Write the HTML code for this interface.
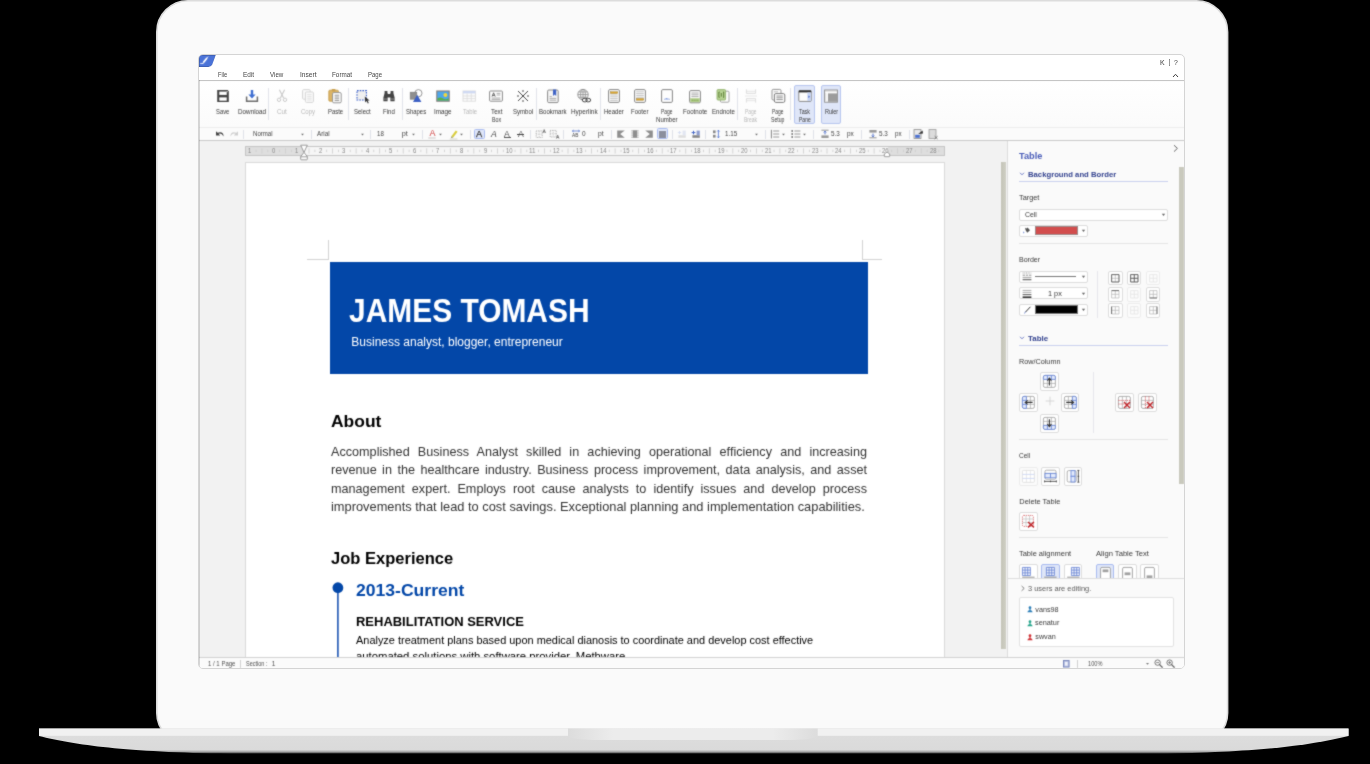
<!DOCTYPE html>
<html><head><meta charset="utf-8"><title>Document Editor</title>
<style>
html,body{margin:0;padding:0;background:#000;}
body{width:1370px;height:764px;overflow:hidden;position:relative;font-family:"Liberation Sans",sans-serif;}
#root{position:absolute;left:0;top:0;width:1370px;height:764px;overflow:hidden;background:#000;}
#root div,#root span.t,#root svg{position:absolute;box-sizing:border-box;}
span.t{white-space:nowrap;line-height:1;transform-origin:0 50%;display:block;}
.clip{overflow:hidden;}
</style></head><body><div id="root">
<svg style="left:0;top:0" width="1370" height="746" viewBox="0 0 1370 746"><path d="M188.0 0.8 H1196.3999999999999 A31.2 31.2 0 0 1 1227.6 32.0 V713 A30 30 0 0 1 1197.6 743 H186.8 A30 30 0 0 1 156.8 713 V32.0 A31.2 31.2 0 0 1 188.0 0.8 Z" fill="#fafafa" stroke="#dcdcdc" stroke-width="1.6"/></svg>
<svg style="left:0;top:720px" width="1370" height="44" viewBox="0 720 1370 44"><defs><linearGradient id="bg1" x1="0" y1="0" x2="0" y2="1"><stop offset="0" stop-color="#dedede"/><stop offset="0.84" stop-color="#dadada"/><stop offset="0.93" stop-color="#a0a0a0"/><stop offset="1" stop-color="#101010"/></linearGradient><linearGradient id="bg2" x1="0" y1="0" x2="1" y2="0"><stop offset="0" stop-color="#dcdcdc"/><stop offset="0.18" stop-color="#ececec"/><stop offset="0.82" stop-color="#ececec"/><stop offset="1" stop-color="#dcdcdc"/></linearGradient></defs><path d="M39 728.6 H1348.5 V736 C1312 745 1262 752 1157 753.8 H230 C125 752 75 745 39 736 Z" fill="url(#bg1)"/><rect x="39" y="728.6" width="1309.5" height="7.2" fill="#f1f1f1"/><path d="M568 728.6 H817.7 V736 C817.7 738.5 800 740 790 740 H596 C586 740 568 738.5 568 736 Z" fill="url(#bg2)"/></svg>
<svg width="0" height="0" style="left:0;top:0"><defs><filter id="soft" x="0" y="0" width="100%" height="100%" color-interpolation-filters="sRGB"><feConvolveMatrix order="3" kernelMatrix="0.03 0.09 0.03 0.09 0.52 0.09 0.03 0.09 0.03" edgeMode="duplicate" preserveAlpha="true"/></filter></defs></svg>
<div style="left:198.4px;top:54px;width:986.4px;height:614.6px;background:#fff;border:1px solid #d4d4d4;border-radius:5px;overflow:hidden;"><div style="left:-199.4px;top:-55px;width:1370px;height:764px;filter:url(#soft);">
<div style="left:199.00px;top:80.00px;width:986.00px;height:1.00px;background:#e3e3e3;"></div>
<div style="left:199.00px;top:81.00px;width:986.00px;height:46.00px;background:linear-gradient(#ffffff,#fbfbfb);"></div>
<div style="left:199.00px;top:127.00px;width:986.00px;height:1.00px;background:#ececec;"></div>
<div style="left:199.00px;top:128.00px;width:986.00px;height:12.00px;background:#fbfbfb;"></div>
<div style="left:199.00px;top:140.00px;width:986.00px;height:1.00px;background:#c9c9c9;"></div>
<div style="left:199.00px;top:141.00px;width:808.50px;height:516.00px;background:#f2f2f2;"></div>
<div style="left:199.00px;top:657.00px;width:986.00px;height:1.00px;background:#d2d2d2;"></div>
<div style="left:199.00px;top:658.00px;width:986.00px;height:11.00px;background:#fbfbfb;"></div>
<div style="left:1001.20px;top:162.40px;width:5.00px;height:486.30px;background:linear-gradient(90deg,#c4c4b8,#cfcfc4);"></div>
<div style="left:1007.00px;top:141.00px;width:178.40px;height:516.00px;background:#fafafa;border-left:1px solid #dcdcdc;"></div>
<div style="left:244.70px;top:146.20px;width:700.00px;height:9.60px;background:#f6f6f6;border:1px solid #c6c6c6;"></div>
<div style="left:245.60px;top:147.10px;width:57.90px;height:7.80px;background:#dedede;"></div>
<div style="left:888.10px;top:147.10px;width:55.70px;height:7.80px;background:#dedede;"></div>
<span class="t" style="left:247.99px;top:147.98px;font-size:6.4px;color:#888;transform:scaleX(0.9273);">1</span>
<span class="t" style="left:271.55px;top:147.98px;font-size:6.4px;color:#888;transform:scaleX(0.9273);">0</span>
<span class="t" style="left:295.11px;top:147.98px;font-size:6.4px;color:#888;transform:scaleX(0.9273);">1</span>
<span class="t" style="left:318.67px;top:147.98px;font-size:6.4px;color:#888;transform:scaleX(0.9273);">2</span>
<span class="t" style="left:342.23px;top:147.98px;font-size:6.4px;color:#888;transform:scaleX(0.9273);">3</span>
<span class="t" style="left:365.79px;top:147.98px;font-size:6.4px;color:#888;transform:scaleX(0.9273);">4</span>
<span class="t" style="left:389.35px;top:147.98px;font-size:6.4px;color:#888;transform:scaleX(0.9273);">5</span>
<span class="t" style="left:412.91px;top:147.98px;font-size:6.4px;color:#888;transform:scaleX(0.9273);">6</span>
<span class="t" style="left:436.47px;top:147.98px;font-size:6.4px;color:#888;transform:scaleX(0.9273);">7</span>
<span class="t" style="left:460.03px;top:147.98px;font-size:6.4px;color:#888;transform:scaleX(0.9273);">8</span>
<span class="t" style="left:483.59px;top:147.98px;font-size:6.4px;color:#888;transform:scaleX(0.9273);">9</span>
<span class="t" style="left:505.50px;top:147.98px;font-size:6.4px;color:#888;transform:scaleX(0.9273);">10</span>
<span class="t" style="left:529.06px;top:147.98px;font-size:6.4px;color:#888;transform:scaleX(0.9936);">11</span>
<span class="t" style="left:552.62px;top:147.98px;font-size:6.4px;color:#888;transform:scaleX(0.9273);">12</span>
<span class="t" style="left:576.18px;top:147.98px;font-size:6.4px;color:#888;transform:scaleX(0.9273);">13</span>
<span class="t" style="left:599.74px;top:147.98px;font-size:6.4px;color:#888;transform:scaleX(0.9273);">14</span>
<span class="t" style="left:623.30px;top:147.98px;font-size:6.4px;color:#888;transform:scaleX(0.9273);">15</span>
<span class="t" style="left:646.86px;top:147.98px;font-size:6.4px;color:#888;transform:scaleX(0.9273);">16</span>
<span class="t" style="left:670.42px;top:147.98px;font-size:6.4px;color:#888;transform:scaleX(0.9273);">17</span>
<span class="t" style="left:693.98px;top:147.98px;font-size:6.4px;color:#888;transform:scaleX(0.9273);">18</span>
<span class="t" style="left:717.54px;top:147.98px;font-size:6.4px;color:#888;transform:scaleX(0.9273);">19</span>
<span class="t" style="left:741.10px;top:147.98px;font-size:6.4px;color:#888;transform:scaleX(0.9273);">20</span>
<span class="t" style="left:764.66px;top:147.98px;font-size:6.4px;color:#888;transform:scaleX(0.9273);">21</span>
<span class="t" style="left:788.22px;top:147.98px;font-size:6.4px;color:#888;transform:scaleX(0.9273);">22</span>
<span class="t" style="left:811.78px;top:147.98px;font-size:6.4px;color:#888;transform:scaleX(0.9273);">23</span>
<span class="t" style="left:835.34px;top:147.98px;font-size:6.4px;color:#888;transform:scaleX(0.9273);">24</span>
<span class="t" style="left:858.90px;top:147.98px;font-size:6.4px;color:#888;transform:scaleX(0.9273);">25</span>
<span class="t" style="left:882.46px;top:147.98px;font-size:6.4px;color:#888;transform:scaleX(0.9273);">26</span>
<span class="t" style="left:906.02px;top:147.98px;font-size:6.4px;color:#888;transform:scaleX(0.9273);">27</span>
<span class="t" style="left:929.58px;top:147.98px;font-size:6.4px;color:#888;transform:scaleX(0.9273);">28</span>
<svg style="left:244.70px;top:146.20px;" width="700" height="9.6" viewBox="0 0 700 9.6"><rect x="10.43" y="3.70" width="0.8" height="2.4" fill="#cdcdcd"/><rect x="16.32" y="2.20" width="0.8" height="5.4" fill="#cdcdcd"/><rect x="22.21" y="3.70" width="0.8" height="2.4" fill="#cdcdcd"/><rect x="33.99" y="3.70" width="0.8" height="2.4" fill="#cdcdcd"/><rect x="39.88" y="2.20" width="0.8" height="5.4" fill="#cdcdcd"/><rect x="45.77" y="3.70" width="0.8" height="2.4" fill="#cdcdcd"/><rect x="57.55" y="3.70" width="0.8" height="2.4" fill="#cdcdcd"/><rect x="63.44" y="2.20" width="0.8" height="5.4" fill="#cdcdcd"/><rect x="69.33" y="3.70" width="0.8" height="2.4" fill="#cdcdcd"/><rect x="81.11" y="3.70" width="0.8" height="2.4" fill="#cdcdcd"/><rect x="87.00" y="2.20" width="0.8" height="5.4" fill="#cdcdcd"/><rect x="92.89" y="3.70" width="0.8" height="2.4" fill="#cdcdcd"/><rect x="104.67" y="3.70" width="0.8" height="2.4" fill="#cdcdcd"/><rect x="110.56" y="2.20" width="0.8" height="5.4" fill="#cdcdcd"/><rect x="116.45" y="3.70" width="0.8" height="2.4" fill="#cdcdcd"/><rect x="128.23" y="3.70" width="0.8" height="2.4" fill="#cdcdcd"/><rect x="134.12" y="2.20" width="0.8" height="5.4" fill="#cdcdcd"/><rect x="140.01" y="3.70" width="0.8" height="2.4" fill="#cdcdcd"/><rect x="151.79" y="3.70" width="0.8" height="2.4" fill="#cdcdcd"/><rect x="157.68" y="2.20" width="0.8" height="5.4" fill="#cdcdcd"/><rect x="163.57" y="3.70" width="0.8" height="2.4" fill="#cdcdcd"/><rect x="175.35" y="3.70" width="0.8" height="2.4" fill="#cdcdcd"/><rect x="181.24" y="2.20" width="0.8" height="5.4" fill="#cdcdcd"/><rect x="187.13" y="3.70" width="0.8" height="2.4" fill="#cdcdcd"/><rect x="198.91" y="3.70" width="0.8" height="2.4" fill="#cdcdcd"/><rect x="204.80" y="2.20" width="0.8" height="5.4" fill="#cdcdcd"/><rect x="210.69" y="3.70" width="0.8" height="2.4" fill="#cdcdcd"/><rect x="222.47" y="3.70" width="0.8" height="2.4" fill="#cdcdcd"/><rect x="228.36" y="2.20" width="0.8" height="5.4" fill="#cdcdcd"/><rect x="234.25" y="3.70" width="0.8" height="2.4" fill="#cdcdcd"/><rect x="246.03" y="3.70" width="0.8" height="2.4" fill="#cdcdcd"/><rect x="251.92" y="2.20" width="0.8" height="5.4" fill="#cdcdcd"/><rect x="257.81" y="3.70" width="0.8" height="2.4" fill="#cdcdcd"/><rect x="269.59" y="3.70" width="0.8" height="2.4" fill="#cdcdcd"/><rect x="275.48" y="2.20" width="0.8" height="5.4" fill="#cdcdcd"/><rect x="281.37" y="3.70" width="0.8" height="2.4" fill="#cdcdcd"/><rect x="293.15" y="3.70" width="0.8" height="2.4" fill="#cdcdcd"/><rect x="299.04" y="2.20" width="0.8" height="5.4" fill="#cdcdcd"/><rect x="304.93" y="3.70" width="0.8" height="2.4" fill="#cdcdcd"/><rect x="316.71" y="3.70" width="0.8" height="2.4" fill="#cdcdcd"/><rect x="322.60" y="2.20" width="0.8" height="5.4" fill="#cdcdcd"/><rect x="328.49" y="3.70" width="0.8" height="2.4" fill="#cdcdcd"/><rect x="340.27" y="3.70" width="0.8" height="2.4" fill="#cdcdcd"/><rect x="346.16" y="2.20" width="0.8" height="5.4" fill="#cdcdcd"/><rect x="352.05" y="3.70" width="0.8" height="2.4" fill="#cdcdcd"/><rect x="363.83" y="3.70" width="0.8" height="2.4" fill="#cdcdcd"/><rect x="369.72" y="2.20" width="0.8" height="5.4" fill="#cdcdcd"/><rect x="375.61" y="3.70" width="0.8" height="2.4" fill="#cdcdcd"/><rect x="387.39" y="3.70" width="0.8" height="2.4" fill="#cdcdcd"/><rect x="393.28" y="2.20" width="0.8" height="5.4" fill="#cdcdcd"/><rect x="399.17" y="3.70" width="0.8" height="2.4" fill="#cdcdcd"/><rect x="410.95" y="3.70" width="0.8" height="2.4" fill="#cdcdcd"/><rect x="416.84" y="2.20" width="0.8" height="5.4" fill="#cdcdcd"/><rect x="422.73" y="3.70" width="0.8" height="2.4" fill="#cdcdcd"/><rect x="434.51" y="3.70" width="0.8" height="2.4" fill="#cdcdcd"/><rect x="440.40" y="2.20" width="0.8" height="5.4" fill="#cdcdcd"/><rect x="446.29" y="3.70" width="0.8" height="2.4" fill="#cdcdcd"/><rect x="458.07" y="3.70" width="0.8" height="2.4" fill="#cdcdcd"/><rect x="463.96" y="2.20" width="0.8" height="5.4" fill="#cdcdcd"/><rect x="469.85" y="3.70" width="0.8" height="2.4" fill="#cdcdcd"/><rect x="481.63" y="3.70" width="0.8" height="2.4" fill="#cdcdcd"/><rect x="487.52" y="2.20" width="0.8" height="5.4" fill="#cdcdcd"/><rect x="493.41" y="3.70" width="0.8" height="2.4" fill="#cdcdcd"/><rect x="505.19" y="3.70" width="0.8" height="2.4" fill="#cdcdcd"/><rect x="511.08" y="2.20" width="0.8" height="5.4" fill="#cdcdcd"/><rect x="516.97" y="3.70" width="0.8" height="2.4" fill="#cdcdcd"/><rect x="528.75" y="3.70" width="0.8" height="2.4" fill="#cdcdcd"/><rect x="534.64" y="2.20" width="0.8" height="5.4" fill="#cdcdcd"/><rect x="540.53" y="3.70" width="0.8" height="2.4" fill="#cdcdcd"/><rect x="552.31" y="3.70" width="0.8" height="2.4" fill="#cdcdcd"/><rect x="558.20" y="2.20" width="0.8" height="5.4" fill="#cdcdcd"/><rect x="564.09" y="3.70" width="0.8" height="2.4" fill="#cdcdcd"/><rect x="575.87" y="3.70" width="0.8" height="2.4" fill="#cdcdcd"/><rect x="581.76" y="2.20" width="0.8" height="5.4" fill="#cdcdcd"/><rect x="587.65" y="3.70" width="0.8" height="2.4" fill="#cdcdcd"/><rect x="599.43" y="3.70" width="0.8" height="2.4" fill="#cdcdcd"/><rect x="605.32" y="2.20" width="0.8" height="5.4" fill="#cdcdcd"/><rect x="611.21" y="3.70" width="0.8" height="2.4" fill="#cdcdcd"/><rect x="622.99" y="3.70" width="0.8" height="2.4" fill="#cdcdcd"/><rect x="628.88" y="2.20" width="0.8" height="5.4" fill="#cdcdcd"/><rect x="634.77" y="3.70" width="0.8" height="2.4" fill="#cdcdcd"/><rect x="646.55" y="3.70" width="0.8" height="2.4" fill="#cdcdcd"/><rect x="652.44" y="2.20" width="0.8" height="5.4" fill="#cdcdcd"/><rect x="658.33" y="3.70" width="0.8" height="2.4" fill="#cdcdcd"/><rect x="670.11" y="3.70" width="0.8" height="2.4" fill="#cdcdcd"/><rect x="676.00" y="2.20" width="0.8" height="5.4" fill="#cdcdcd"/><rect x="681.89" y="3.70" width="0.8" height="2.4" fill="#cdcdcd"/><rect x="693.67" y="3.70" width="0.8" height="2.4" fill="#cdcdcd"/></svg>
<svg style="left:298.50px;top:144.00px;" width="10" height="17" viewBox="0 0 10 17"><path d="M1.7 1.2 H8.3 L5 8.4 Z" fill="#fff" stroke="#858585" stroke-width="0.8" stroke-linejoin="round"/><path d="M5 8.4 L8.3 12.6 V15.2 Q8.3 15.8 7.7 15.8 H2.3 Q1.7 15.8 1.7 15.2 V12.6 Z M1.7 12.8 H8.3" fill="#fff" stroke="#858585" stroke-width="0.8" stroke-linejoin="round"/></svg>
<svg style="left:883.00px;top:151.40px;" width="8" height="6.4" viewBox="0 0 8 6.4"><path d="M4 1 L6.7 3 V5.2 Q6.7 5.7 6.2 5.7 H1.8 Q1.3 5.7 1.3 5.2 V3 Z" fill="#fff" stroke="#858585" stroke-width="0.8" stroke-linejoin="round"/></svg>
<span class="t" style="left:207.80px;top:660.91px;font-size:6.6px;color:#505050;transform:scaleX(0.9140);">1 / 1 Page</span>
<div style="left:240.20px;top:659.50px;width:1.00px;height:8.00px;background:#d0d0d0;"></div>
<span class="t" style="left:245.80px;top:660.91px;font-size:6.6px;color:#505050;transform:scaleX(0.8372);">Section :</span>
<span class="t" style="left:271.80px;top:660.91px;font-size:6.6px;color:#505050;">1</span>
<svg style="left:1063.00px;top:660.00px;" width="8" height="8" viewBox="0 0 8 8"><rect x="0.5" y="0.5" width="5.6" height="6.6" fill="#b4bde0" stroke="#7382b8" stroke-width="0.9"/><rect x="1.9" y="1.9" width="2.8" height="3.8" fill="#eef1fa"/></svg>
<div style="left:1077.40px;top:659.50px;width:1.00px;height:8.00px;background:#d0d0d0;"></div>
<span class="t" style="left:1088.30px;top:661.08px;font-size:6.4px;color:#505050;transform:scaleX(0.8799);">100%</span>
<svg style="left:1144.50px;top:662.00px;" width="5" height="4" viewBox="0 0 5 4"><path d="M1 1 H4 L2.5 2.8 Z" fill="#777"/></svg>
<svg style="left:1153.80px;top:659.40px;" width="9" height="9" viewBox="0 0 9 9"><circle cx="3.6" cy="3.6" r="2.7" fill="#fff" stroke="#666" stroke-width="0.9"/><path d="M5.6 5.6 L8.2 8.2" stroke="#666" stroke-width="1.3" stroke-linecap="round"/><path d="M2.2 3.6 H5" stroke="#666" stroke-width="0.8"/></svg>
<svg style="left:1165.80px;top:659.40px;" width="9" height="9" viewBox="0 0 9 9"><circle cx="3.6" cy="3.6" r="2.7" fill="#fff" stroke="#666" stroke-width="0.9"/><path d="M5.6 5.6 L8.2 8.2" stroke="#666" stroke-width="1.3" stroke-linecap="round"/><path d="M2.2 3.6 H5" stroke="#666" stroke-width="0.8"/><path d="M3.6 2.2 V5" stroke="#666" stroke-width="0.8"/></svg>
<div class="clip" style="left:244.8px;top:162.2px;width:700px;height:494.9px;background:#fff;border:1px solid #dadada;border-bottom:none;"><div style="left:-245.8px;top:-163.2px;width:1370px;height:764px;">
<div style="left:327.50px;top:240.40px;width:1.00px;height:19.60px;background:#d2d2d2;"></div>
<div style="left:307.40px;top:259.30px;width:20.60px;height:1.00px;background:#d2d2d2;"></div>
<div style="left:862.00px;top:240.40px;width:1.00px;height:19.60px;background:#d2d2d2;"></div>
<div style="left:862.00px;top:259.30px;width:20.40px;height:1.00px;background:#d2d2d2;"></div>
<div style="left:330.20px;top:261.50px;width:537.50px;height:112.40px;background:#0347a8;"></div>
<span class="t" style="left:348.90px;top:294.03px;font-size:33.4px;color:#fff;font-weight:bold;transform:scaleX(0.8962);">JAMES TOMASH</span>
<span class="t" style="left:351.30px;top:336.14px;font-size:12px;color:#fff;">Business analyst, blogger, entrepreneur</span>
<span class="t" style="left:331.20px;top:413.75px;font-size:16.6px;color:#000;font-weight:bold;transform:scaleX(1.0514);">About</span>
<div style="left:331px;top:444.81px;width:555.44px;font-size:13.1px;line-height:1;color:#333;text-align:justify;text-align-last:justify;white-space:normal;height:14px;overflow:visible;transform-origin:0 50%;transform:scaleX(0.965);">Accomplished Business Analyst skilled in achieving operational efficiency and increasing</div>
<div style="left:331px;top:463.31px;width:555.44px;font-size:13.1px;line-height:1;color:#333;text-align:justify;text-align-last:justify;white-space:normal;height:14px;overflow:visible;transform-origin:0 50%;transform:scaleX(0.965);">revenue in the healthcare industry. Business process improvement, data analysis, and asset</div>
<div style="left:331px;top:481.81px;width:555.44px;font-size:13.1px;line-height:1;color:#333;text-align:justify;text-align-last:justify;white-space:normal;height:14px;overflow:visible;transform-origin:0 50%;transform:scaleX(0.965);">management expert. Employs root cause analysts to identify issues and develop process</div>
<span class="t" style="left:331.00px;top:499.91px;font-size:13.1px;color:#333;transform:scaleX(0.9804);">improvements that lead to cost savings. Exceptional planning and implementation capabilities.</span>
<span class="t" style="left:330.80px;top:549.87px;font-size:17.4px;color:#000;font-weight:bold;transform:scaleX(0.9502);">Job Experience</span>
<svg style="left:335.00px;top:587.00px;" width="6" height="80" viewBox="0 0 6 80"><rect x="2.1" y="0" width="1.6" height="80" fill="#1d55b2"/></svg>
<svg style="left:331.00px;top:581.00px;" width="14" height="14" viewBox="0 0 14 14"><circle cx="6.9" cy="6.7" r="5.4" fill="#0347a8"/></svg>
<span class="t" style="left:356.20px;top:582.95px;font-size:16.6px;color:#0347a8;font-weight:bold;transform:scaleX(1.0585);">2013-Current</span>
<span class="t" style="left:356.20px;top:615.27px;font-size:13.5px;color:#000;font-weight:bold;transform:scaleX(0.9607);">REHABILITATION SERVICE</span>
<span class="t" style="left:356.20px;top:634.38px;font-size:11.6px;color:#000;transform:scaleX(0.9437);">Analyze treatment plans based upon medical dianosis to coordinate and develop cost effective</span>
<span class="t" style="left:356.20px;top:650.48px;font-size:11.6px;color:#000;transform:scaleX(0.9743);">automated solutions with software provider, Methware</span>
</div></div>
<div style="left:1179.00px;top:167.40px;width:4.80px;height:316.80px;background:#c9c9bd;"></div>
<svg style="left:1172.00px;top:144.00px;" width="7" height="9" viewBox="0 0 7 9"><path d="M2 1.2 L5.4 4.4 L2 7.6" fill="none" stroke="#555" stroke-width="0.9"/></svg>
<span class="t" style="left:1019.30px;top:151.27px;font-size:9.6px;color:#4a5db9;font-weight:bold;transform:scaleX(0.9607);">Table</span>
<svg style="left:1019.20px;top:171.30px;" width="6" height="6" viewBox="0 0 6 6"><path d="M1 1.8 L3 3.8 L5 1.8" fill="none" stroke="#4a5db9" stroke-width="0.8"/></svg>
<span class="t" style="left:1027.90px;top:170.87px;font-size:7.6px;color:#33428f;font-weight:bold;transform:scaleX(1.0151);">Background and Border</span>
<div style="left:1019.30px;top:180.70px;width:149.20px;height:1.00px;background:#c9d0ee;"></div>
<span class="t" style="left:1019.30px;top:194.14px;font-size:7.4px;color:#383838;transform:scaleX(0.9921);">Target</span>
<div style="left:1019.30px;top:208.80px;width:149.20px;height:11.80px;background:#fff;border:1px solid #dcdcdc;border-radius:2px;"></div>
<span class="t" style="left:1024.90px;top:210.94px;font-size:7.4px;color:#383838;transform:scaleX(0.9335);">Cell</span>
<svg style="left:1160.90px;top:213.20px;" width="5" height="4" viewBox="0 0 5 4"><path d="M0.8 0.8 H4.2 L2.5 2.9 Z" fill="#666"/></svg>
<div style="left:1019.30px;top:225.20px;width:68.40px;height:11.50px;background:#fff;border:1px solid #dcdcdc;border-radius:2px;"></div>
<svg style="left:1021.60px;top:226.40px;" width="9" height="9" viewBox="0 0 9 9"><path d="M3.2 3.4 L5.6 1.4 L8 4.2 L5.2 6.8 Z" fill="#555"/><path d="M3 2 L5 3.6" stroke="#555" stroke-width="0.8"/><path d="M1.8 5.2 Q0.8 7 1.8 7.4 Q2.8 7 1.8 5.2Z" fill="#3f63c6"/></svg>
<div style="left:1034.60px;top:226.40px;width:43.20px;height:9.10px;background:#d24d4d;border:1px solid #9c8a8a;"></div>
<svg style="left:1080.80px;top:229.40px;" width="5" height="4" viewBox="0 0 5 4"><path d="M0.8 0.8 H4.2 L2.5 2.9 Z" fill="#666"/></svg>
<div style="left:1019.30px;top:242.80px;width:149.20px;height:1.00px;background:#e5e5e5;"></div>
<span class="t" style="left:1019.30px;top:256.34px;font-size:7.4px;color:#383838;transform:scaleX(0.9501);">Border</span>
<div style="left:1019.30px;top:270.80px;width:68.40px;height:12.20px;background:#fff;border:1px solid #dcdcdc;border-radius:2px;"></div>
<svg style="left:1022.40px;top:272.40px;" width="10" height="9" viewBox="0 0 10 9"><path d="M0.6 1 H9.4" stroke="#999" stroke-width="0.9" stroke-dasharray="1 0.7"/><path d="M0.6 3.2 H9.4" stroke="#888" stroke-width="0.9" stroke-dasharray="2.4 0.8"/><path d="M0.6 5.4 H9.4" stroke="#999" stroke-width="0.9"/><path d="M0.6 7.6 H9.4" stroke="#777" stroke-width="1.4"/></svg>
<div style="left:1034.60px;top:276.10px;width:41.20px;height:0.90px;background:#777;"></div>
<svg style="left:1080.80px;top:275.20px;" width="5" height="4" viewBox="0 0 5 4"><path d="M0.8 0.8 H4.2 L2.5 2.9 Z" fill="#666"/></svg>
<div style="left:1019.30px;top:287.30px;width:68.40px;height:12.10px;background:#fff;border:1px solid #dcdcdc;border-radius:2px;"></div>
<svg style="left:1022.40px;top:288.60px;" width="10" height="10" viewBox="0 0 10 10"><path d="M0.6 1.4 H9.4 M0.6 3.4 H9.4" stroke="#8a8a8a" stroke-width="0.7"/><path d="M0.6 5.6 H9.4" stroke="#666" stroke-width="1.1"/><path d="M0.6 8.2 H9.4" stroke="#333" stroke-width="1.6"/></svg>
<span class="t" style="left:1048.40px;top:289.57px;font-size:7.6px;color:#383838;transform:scaleX(0.9607);">1 px</span>
<svg style="left:1080.80px;top:291.80px;" width="5" height="4" viewBox="0 0 5 4"><path d="M0.8 0.8 H4.2 L2.5 2.9 Z" fill="#666"/></svg>
<div style="left:1019.30px;top:303.50px;width:68.40px;height:12.00px;background:#fff;border:1px solid #dcdcdc;border-radius:2px;"></div>
<svg style="left:1022.60px;top:304.80px;" width="9" height="9" viewBox="0 0 9 9"><path d="M2.4 7.2 L7.4 1.8" stroke="#333" stroke-width="1"/><path d="M1.4 8.2 L2.6 7" stroke="#3f63c6" stroke-width="1"/></svg>
<div style="left:1034.60px;top:305.00px;width:43.20px;height:8.60px;background:#000;border:1px solid #777;"></div>
<svg style="left:1080.80px;top:308.00px;" width="5" height="4" viewBox="0 0 5 4"><path d="M0.8 0.8 H4.2 L2.5 2.9 Z" fill="#666"/></svg>
<div style="left:1096.60px;top:270.80px;width:1.00px;height:47.20px;background:#e6e6ec;"></div>
<div style="left:1108.40px;top:270.60px;width:14.60px;height:14.60px;background:#fff;border:1px solid #dddddd;border-radius:2px;"></div>
<svg style="left:1108.40px;top:270.60px;" width="14.6" height="14.6" viewBox="0 0 14.6 14.6"><path d="M3.6 3.6 H11 V11 H3.6 Z M7.3 3.6 V11 M3.6 7.3 H11" fill="none" stroke="#b5b5b5" stroke-width="0.7"/><path d="M3.6 3.6 H11 V11 H3.6 Z" fill="none" stroke="#555" stroke-width="0.8"/></svg>
<div style="left:1126.80px;top:270.60px;width:14.60px;height:14.60px;background:#fff;border:1px solid #dddddd;border-radius:2px;"></div>
<svg style="left:1126.80px;top:270.60px;" width="14.6" height="14.6" viewBox="0 0 14.6 14.6"><path d="M3.6 3.6 H11 V11 H3.6 Z M7.3 3.6 V11 M3.6 7.3 H11" fill="none" stroke="#b5b5b5" stroke-width="0.7"/><path d="M3.6 3.6 H11 V11 H3.6 Z M7.3 3.6 V11 M3.6 7.3 H11" fill="none" stroke="#555" stroke-width="0.8"/></svg>
<div style="left:1145.50px;top:270.60px;width:14.60px;height:14.60px;background:#fcfcfc;border:1px solid #ededed;border-radius:2px;"></div>
<svg style="left:1145.50px;top:270.60px;" width="14.6" height="14.6" viewBox="0 0 14.6 14.6"><path d="M3.6 3.6 H11 V11 H3.6 Z M7.3 3.6 V11 M3.6 7.3 H11" fill="none" stroke="#e4e4e4" stroke-width="0.8"/></svg>
<div style="left:1108.40px;top:287.00px;width:14.60px;height:14.60px;background:#fff;border:1px solid #dddddd;border-radius:2px;"></div>
<svg style="left:1108.40px;top:287.00px;" width="14.6" height="14.6" viewBox="0 0 14.6 14.6"><path d="M3.6 3.6 H11 V11 H3.6 Z M7.3 3.6 V11 M3.6 7.3 H11" fill="none" stroke="#b5b5b5" stroke-width="0.7"/><path d="M3.6 3.6 H11" fill="none" stroke="#555" stroke-width="0.8"/></svg>
<div style="left:1126.80px;top:287.00px;width:14.60px;height:14.60px;background:#fcfcfc;border:1px solid #ededed;border-radius:2px;"></div>
<svg style="left:1126.80px;top:287.00px;" width="14.6" height="14.6" viewBox="0 0 14.6 14.6"><path d="M3.6 3.6 H11 V11 H3.6 Z M7.3 3.6 V11 M3.6 7.3 H11" fill="none" stroke="#e4e4e4" stroke-width="0.8"/></svg>
<div style="left:1145.50px;top:287.00px;width:14.60px;height:14.60px;background:#fff;border:1px solid #dddddd;border-radius:2px;"></div>
<svg style="left:1145.50px;top:287.00px;" width="14.6" height="14.6" viewBox="0 0 14.6 14.6"><path d="M3.6 3.6 H11 V11 H3.6 Z M7.3 3.6 V11 M3.6 7.3 H11" fill="none" stroke="#b5b5b5" stroke-width="0.7"/><path d="M3.6 11 H11" fill="none" stroke="#555" stroke-width="0.8"/></svg>
<div style="left:1108.40px;top:303.20px;width:14.60px;height:14.60px;background:#fff;border:1px solid #dddddd;border-radius:2px;"></div>
<svg style="left:1108.40px;top:303.20px;" width="14.6" height="14.6" viewBox="0 0 14.6 14.6"><path d="M3.6 3.6 H11 V11 H3.6 Z M7.3 3.6 V11 M3.6 7.3 H11" fill="none" stroke="#b5b5b5" stroke-width="0.7"/><path d="M3.6 3.6 V11" fill="none" stroke="#555" stroke-width="0.8"/></svg>
<div style="left:1126.80px;top:303.20px;width:14.60px;height:14.60px;background:#fcfcfc;border:1px solid #ededed;border-radius:2px;"></div>
<svg style="left:1126.80px;top:303.20px;" width="14.6" height="14.6" viewBox="0 0 14.6 14.6"><path d="M3.6 3.6 H11 V11 H3.6 Z M7.3 3.6 V11 M3.6 7.3 H11" fill="none" stroke="#e4e4e4" stroke-width="0.8"/></svg>
<div style="left:1145.50px;top:303.20px;width:14.60px;height:14.60px;background:#fff;border:1px solid #dddddd;border-radius:2px;"></div>
<svg style="left:1145.50px;top:303.20px;" width="14.6" height="14.6" viewBox="0 0 14.6 14.6"><path d="M3.6 3.6 H11 V11 H3.6 Z M7.3 3.6 V11 M3.6 7.3 H11" fill="none" stroke="#b5b5b5" stroke-width="0.7"/><path d="M11 3.6 V11" fill="none" stroke="#555" stroke-width="0.8"/></svg>
<svg style="left:1019.20px;top:335.10px;" width="6" height="6" viewBox="0 0 6 6"><path d="M1 1.8 L3 3.8 L5 1.8" fill="none" stroke="#4a5db9" stroke-width="0.8"/></svg>
<span class="t" style="left:1027.90px;top:334.67px;font-size:7.6px;color:#33428f;font-weight:bold;transform:scaleX(1.0423);">Table</span>
<div style="left:1019.30px;top:344.60px;width:149.20px;height:1.00px;background:#c9d0ee;"></div>
<span class="t" style="left:1019.30px;top:357.74px;font-size:7.4px;color:#383838;transform:scaleX(0.9798);">Row/Column</span>
<div style="left:1040.10px;top:372.10px;width:18.70px;height:18.70px;background:#fff;border:1px solid #dddddd;border-radius:2px;"></div>
<svg style="left:1040.10px;top:372.10px;" width="18.7" height="18.7" viewBox="0 0 18.7 18.7"><rect x="3.4" y="3.4" width="12" height="12" rx="1.6" fill="#fff" stroke="#9a9a9a" stroke-width="0.8"/><path d="M7.4 3.4 V15.4 M11.4 3.4 V15.4 M3.4 7.4 H15.4 M3.4 11.4 H15.4" stroke="#a8a8a8" stroke-width="0.7"/><path d="M3.4 7.4 V5 Q3.4 3.4 5 3.4 H13.8 Q15.4 3.4 15.4 5 V7.4 Z M7.4 3.4 V7.4 M11.4 3.4 V7.4" fill="#e3eafb" stroke="#6f8cd9" stroke-width="0.9"/><path d="M9.4 13.6 V6.6 M7.4 8.6 L9.4 6.2 L11.4 8.6" stroke="#333" stroke-width="1.1" fill="none"/></svg>
<div style="left:1019.30px;top:393.10px;width:18.70px;height:18.70px;background:#fff;border:1px solid #dddddd;border-radius:2px;"></div>
<svg style="left:1019.30px;top:393.10px;" width="18.7" height="18.7" viewBox="0 0 18.7 18.7"><rect x="3.4" y="3.4" width="12" height="12" rx="1.6" fill="#fff" stroke="#9a9a9a" stroke-width="0.8"/><path d="M7.4 3.4 V15.4 M11.4 3.4 V15.4 M3.4 7.4 H15.4 M3.4 11.4 H15.4" stroke="#a8a8a8" stroke-width="0.7"/><path d="M7.4 3.4 H5 Q3.4 3.4 3.4 5 V13.8 Q3.4 15.4 5 15.4 H7.4 Z M3.4 7.4 H7.4 M3.4 11.4 H7.4" fill="#e3eafb" stroke="#6f8cd9" stroke-width="0.9"/><path d="M13.6 9.4 H6.6 M8.6 7.4 L6.2 9.4 L8.6 11.4" stroke="#333" stroke-width="1.1" fill="none"/></svg>
<div style="left:1060.80px;top:393.10px;width:18.70px;height:18.70px;background:#fff;border:1px solid #dddddd;border-radius:2px;"></div>
<svg style="left:1060.80px;top:393.10px;" width="18.7" height="18.7" viewBox="0 0 18.7 18.7"><rect x="3.4" y="3.4" width="12" height="12" rx="1.6" fill="#fff" stroke="#9a9a9a" stroke-width="0.8"/><path d="M7.4 3.4 V15.4 M11.4 3.4 V15.4 M3.4 7.4 H15.4 M3.4 11.4 H15.4" stroke="#a8a8a8" stroke-width="0.7"/><path d="M11.4 3.4 H13.8 Q15.4 3.4 15.4 5 V13.8 Q15.4 15.4 13.8 15.4 H11.4 Z M11.4 7.4 H15.4 M11.4 11.4 H15.4" fill="#e3eafb" stroke="#6f8cd9" stroke-width="0.9"/><path d="M5.2 9.4 H12.2 M10.2 7.4 L12.6 9.4 L10.2 11.4" stroke="#333" stroke-width="1.1" fill="none"/></svg>
<div style="left:1040.10px;top:414.40px;width:18.70px;height:18.70px;background:#fff;border:1px solid #dddddd;border-radius:2px;"></div>
<svg style="left:1040.10px;top:414.40px;" width="18.7" height="18.7" viewBox="0 0 18.7 18.7"><rect x="3.4" y="3.4" width="12" height="12" rx="1.6" fill="#fff" stroke="#9a9a9a" stroke-width="0.8"/><path d="M7.4 3.4 V15.4 M11.4 3.4 V15.4 M3.4 7.4 H15.4 M3.4 11.4 H15.4" stroke="#a8a8a8" stroke-width="0.7"/><path d="M3.4 11.4 V13.8 Q3.4 15.4 5 15.4 H13.8 Q15.4 15.4 15.4 13.8 V11.4 Z M7.4 11.4 V15.4 M11.4 11.4 V15.4" fill="#e3eafb" stroke="#6f8cd9" stroke-width="0.9"/><path d="M9.4 5.2 V12.2 M7.4 10.2 L9.4 12.6 L11.4 10.2" stroke="#333" stroke-width="1.1" fill="none"/></svg>
<svg style="left:1044.70px;top:395.50px;" width="10" height="10" viewBox="0 0 10 10"><path d="M5 0.6 V9.4 M0.6 5 H9.4" stroke="#d2d2d2" stroke-width="0.9"/></svg>
<div style="left:1093.40px;top:372.00px;width:1.00px;height:61.20px;background:#e6e6ec;"></div>
<div style="left:1115.10px;top:393.10px;width:18.70px;height:18.70px;background:#fff;border:1px solid #dddddd;border-radius:2px;"></div>
<svg style="left:1115.10px;top:393.10px;" width="18.7" height="18.7" viewBox="0 0 18.7 18.7"><rect x="3.4" y="3.4" width="12" height="12" rx="1.6" fill="#fff" stroke="#9a9a9a" stroke-width="0.8"/><path d="M7.4 3.4 V15.4 M11.4 3.4 V15.4" stroke="#a8a8a8" stroke-width="0.7"/><path d="M3.4 7.4 H15.4 M3.4 11 H15.4" stroke="#d65a5e" stroke-width="0.9" stroke-dasharray="1.2 0.9"/><path d="M9 9 L15 15 M15 9 L9 15" stroke="#c0282d" stroke-width="1.4"/></svg>
<div style="left:1138.00px;top:393.10px;width:18.70px;height:18.70px;background:#fff;border:1px solid #dddddd;border-radius:2px;"></div>
<svg style="left:1138.00px;top:393.10px;" width="18.7" height="18.7" viewBox="0 0 18.7 18.7"><rect x="3.4" y="3.4" width="12" height="12" rx="1.6" fill="#fff" stroke="#9a9a9a" stroke-width="0.8"/><path d="M3.4 7.4 H15.4 M3.4 11.4 H15.4" stroke="#a8a8a8" stroke-width="0.7"/><path d="M7.4 3.4 V15.4 M11 3.4 V15.4" stroke="#d65a5e" stroke-width="0.9" stroke-dasharray="1.2 0.9"/><path d="M9 9 L15 15 M15 9 L9 15" stroke="#c0282d" stroke-width="1.4"/></svg>
<div style="left:1019.30px;top:439.30px;width:149.20px;height:1.00px;background:#e5e5e5;"></div>
<span class="t" style="left:1019.30px;top:452.34px;font-size:7.4px;color:#383838;transform:scaleX(0.8786);">Cell</span>
<div style="left:1019.30px;top:467.00px;width:18.70px;height:18.70px;background:#fbfbfb;border:1px solid #ececec;border-radius:2px;"></div>
<svg style="left:1019.30px;top:467.00px;" width="18.7" height="18.7" viewBox="0 0 18.7 18.7"><rect x="3.4" y="3.4" width="12" height="12" rx="1" fill="#fff" stroke="#dcdcdc" stroke-width="0.8"/><path d="M7.4 3.4 V15.4 M11.4 3.4 V15.4" stroke="#e0e0e0" stroke-width="0.7"/><path d="M3.4 7.4 H15.4 M3.4 11.4 H15.4" stroke="#cdd7f3" stroke-width="0.9"/></svg>
<div style="left:1041.40px;top:467.00px;width:18.70px;height:18.70px;background:#fff;border:1px solid #dddddd;border-radius:2px;"></div>
<svg style="left:1041.40px;top:467.00px;" width="18.7" height="18.7" viewBox="0 0 18.7 18.7"><rect x="4" y="3.2" width="11" height="9" rx="1.4" fill="#fff" stroke="#9a9a9a" stroke-width="0.8"/><path d="M4 6.4 H15" stroke="#a8a8a8" stroke-width="0.7"/><rect x="4" y="6.4" width="5.5" height="4.4" fill="#e3eafb" stroke="#6f8cd9" stroke-width="0.9"/><rect x="9.5" y="6.4" width="5.5" height="4.4" fill="#e3eafb" stroke="#6f8cd9" stroke-width="0.9"/><path d="M3.6 14.4 H15.4 M3.6 13.4 V15.4 M15.4 13.4 V15.4 M9.5 13.6 V15.2" stroke="#333" stroke-width="0.8"/></svg>
<div style="left:1063.80px;top:467.00px;width:18.70px;height:18.70px;background:#fff;border:1px solid #dddddd;border-radius:2px;"></div>
<svg style="left:1063.80px;top:467.00px;" width="18.7" height="18.7" viewBox="0 0 18.7 18.7"><rect x="3.2" y="3.6" width="9" height="11.4" rx="1.4" fill="#fff" stroke="#9a9a9a" stroke-width="0.8"/><rect x="7" y="3.6" width="4" height="5.7" fill="#e3eafb" stroke="#6f8cd9" stroke-width="0.9"/><rect x="7" y="9.3" width="4" height="5.7" fill="#e3eafb" stroke="#6f8cd9" stroke-width="0.9"/><path d="M14.4 3.4 V15.2 M13.4 3.4 H15.4 M13.4 15.2 H15.4 M13.6 9.3 H15.2" stroke="#333" stroke-width="0.8"/></svg>
<span class="t" style="left:1019.30px;top:498.14px;font-size:7.4px;color:#383838;">Delete Table</span>
<div style="left:1019.30px;top:512.40px;width:18.70px;height:18.70px;background:#fff;border:1px solid #dddddd;border-radius:2px;"></div>
<svg style="left:1019.30px;top:512.40px;" width="18.7" height="18.7" viewBox="0 0 18.7 18.7"><rect x="3.4" y="3.4" width="11" height="11" rx="1.4" fill="#fff" stroke="#d65a5e" stroke-width="0.8" stroke-dasharray="1.3 0.8"/><path d="M7 3.4 V14.4 M10.6 3.4 V14.4 M3.4 7 H14.4 M3.4 10.6 H14.4" stroke="#bdbdbd" stroke-width="0.7"/><path d="M9 10 L15 15.4 M15 10 L9 15.4" stroke="#c0282d" stroke-width="1.4"/></svg>
<div style="left:1019.30px;top:537.20px;width:149.20px;height:1.00px;background:#e5e5e5;"></div>
<span class="t" style="left:1019.30px;top:550.34px;font-size:7.4px;color:#383838;transform:scaleX(1.0072);">Table alignment</span>
<span class="t" style="left:1095.80px;top:550.34px;font-size:7.4px;color:#383838;transform:scaleX(1.0280);">Align Table Text</span>
<div style="left:1019.30px;top:564.40px;width:18.70px;height:18.70px;background:#fff;border:1px solid #dddddd;border-radius:2px;"></div>
<svg style="left:1019.30px;top:564.40px;" width="18.7" height="18.7" viewBox="0 0 18.7 18.7"><path d="M3.4 3.4 H11.4 V11.6 H3.4 Z M6.07 3.4 V11.6 M8.73 3.4 V11.6 M3.4 6.1 H11.4 M3.4 8.9 H11.4" fill="#f4f6fd" stroke="#5878cf" stroke-width="0.75"/><path d="M3.2 13.2 H15.6" stroke="#8a8a8a" stroke-width="0.9"/></svg>
<div style="left:1041.40px;top:564.40px;width:18.70px;height:18.70px;background:#dfe6f8;border:1px solid #a9bbf0;border-radius:2px;"></div>
<svg style="left:1041.40px;top:564.40px;" width="18.7" height="18.7" viewBox="0 0 18.7 18.7"><path d="M5.4 3.4 H13.4 V11.6 H5.4 Z M8.07 3.4 V11.6 M10.73 3.4 V11.6 M5.4 6.1 H13.4 M5.4 8.9 H13.4" fill="#f4f6fd" stroke="#5878cf" stroke-width="0.75"/><path d="M3.2 13.2 H15.6" stroke="#8a8a8a" stroke-width="0.9"/></svg>
<div style="left:1063.80px;top:564.40px;width:18.70px;height:18.70px;background:#fff;border:1px solid #dddddd;border-radius:2px;"></div>
<svg style="left:1063.80px;top:564.40px;" width="18.7" height="18.7" viewBox="0 0 18.7 18.7"><path d="M7.4 3.4 H15.4 V11.6 H7.4 Z M10.07 3.4 V11.6 M12.73 3.4 V11.6 M7.4 6.1 H15.4 M7.4 8.9 H15.4" fill="#f4f6fd" stroke="#5878cf" stroke-width="0.75"/><path d="M3.2 13.2 H15.6" stroke="#8a8a8a" stroke-width="0.9"/></svg>
<div style="left:1095.50px;top:564.40px;width:18.70px;height:18.70px;background:#dfe6f8;border:1px solid #a9bbf0;border-radius:2px;"></div>
<svg style="left:1095.50px;top:564.40px;" width="18.7" height="18.7" viewBox="0 0 18.7 18.7"><rect x="4.6" y="3.4" width="9.8" height="14" rx="1.4" fill="#fff" stroke="#8e8e8e" stroke-width="0.8"/><rect x="6.6" y="5.4" width="5.8" height="2.8" fill="#a2a2a2"/></svg>
<div style="left:1118.00px;top:564.40px;width:18.70px;height:18.70px;background:#fff;border:1px solid #dddddd;border-radius:2px;"></div>
<svg style="left:1118.00px;top:564.40px;" width="18.7" height="18.7" viewBox="0 0 18.7 18.7"><rect x="4.6" y="3.4" width="9.8" height="14" rx="1.4" fill="#fff" stroke="#8e8e8e" stroke-width="0.8"/><rect x="6.6" y="8.4" width="5.8" height="2.8" fill="#a2a2a2"/></svg>
<div style="left:1140.20px;top:564.40px;width:18.70px;height:18.70px;background:#fff;border:1px solid #dddddd;border-radius:2px;"></div>
<svg style="left:1140.20px;top:564.40px;" width="18.7" height="18.7" viewBox="0 0 18.7 18.7"><rect x="4.6" y="3.4" width="9.8" height="14" rx="1.4" fill="#fff" stroke="#8e8e8e" stroke-width="0.8"/><rect x="6.6" y="11.4" width="5.8" height="2.8" fill="#a2a2a2"/></svg>
<div style="left:1008.00px;top:578.00px;width:177.40px;height:79.20px;background:#fafafa;border-top:1px solid #dedede;"></div>
<svg style="left:1019.60px;top:585.40px;" width="6" height="7" viewBox="0 0 6 7"><path d="M1.6 1 L4.2 3.4 L1.6 5.8" fill="none" stroke="#666" stroke-width="0.8"/></svg>
<span class="t" style="left:1027.90px;top:585.24px;font-size:7.4px;color:#5a5a5a;transform:scaleX(1.0076);">3 users are editing.</span>
<div style="left:1019.30px;top:597.30px;width:154.40px;height:49.60px;background:#fff;border:1px solid #e2e2e2;border-radius:2px;"></div>
<svg style="left:1026.60px;top:605.90px;" width="6" height="7" viewBox="0 0 6 7"><circle cx="3" cy="1.7" r="1.4" fill="#2d7fb8"/><path d="M2.4 2.6 H3.6 V4.2 Q5.4 4.4 5.6 6.2 H0.4 Q0.6 4.4 2.4 4.2 Z" fill="#2d7fb8"/></svg>
<span class="t" style="left:1035.30px;top:605.81px;font-size:7.2px;color:#3a3a3a;">vans98</span>
<svg style="left:1026.60px;top:619.60px;" width="6" height="7" viewBox="0 0 6 7"><circle cx="3" cy="1.7" r="1.4" fill="#27a58c"/><path d="M2.4 2.6 H3.6 V4.2 Q5.4 4.4 5.6 6.2 H0.4 Q0.6 4.4 2.4 4.2 Z" fill="#27a58c"/></svg>
<span class="t" style="left:1035.30px;top:619.41px;font-size:7.2px;color:#3a3a3a;transform:scaleX(1.0162);">senatur</span>
<svg style="left:1026.60px;top:633.50px;" width="6" height="7" viewBox="0 0 6 7"><circle cx="3" cy="1.7" r="1.4" fill="#cf3236"/><path d="M2.4 2.6 H3.6 V4.2 Q5.4 4.4 5.6 6.2 H0.4 Q0.6 4.4 2.4 4.2 Z" fill="#cf3236"/></svg>
<span class="t" style="left:1035.30px;top:633.11px;font-size:7.2px;color:#3a3a3a;">swvan</span>
<svg style="left:199.40px;top:55.00px;" width="18" height="13" viewBox="0 0 18 13"><path d="M0 0 H16.7 L13.3 9.2 Q12.3 11.9 9.4 11.9 H0 Z" fill="#4a72d7"/><path d="M3.6 8.4 L8.9 1.9" stroke="#fff" stroke-width="0.8" stroke-linecap="round"/><path d="M4.9 6.9 L7.6 3.5" stroke="#fff" stroke-width="1.7" stroke-linecap="round"/><path d="M1.6 8.5 H4.2" stroke="#fff" stroke-width="0.8" stroke-linecap="round"/></svg>
<span class="t" style="left:217.90px;top:70.84px;font-size:7.4px;color:#505050;transform:scaleX(0.7800);">File</span>
<span class="t" style="left:243.20px;top:70.84px;font-size:7.4px;color:#505050;transform:scaleX(0.8706);">Edit</span>
<span class="t" style="left:270.10px;top:70.84px;font-size:7.4px;color:#505050;transform:scaleX(0.8361);">View</span>
<span class="t" style="left:299.50px;top:70.84px;font-size:7.4px;color:#505050;transform:scaleX(0.8972);">Insert</span>
<span class="t" style="left:331.90px;top:70.84px;font-size:7.4px;color:#505050;transform:scaleX(0.8579);">Format</span>
<span class="t" style="left:367.90px;top:70.84px;font-size:7.4px;color:#505050;transform:scaleX(0.8101);">Page</span>
<span class="t" style="left:1159.60px;top:58.87px;font-size:7px;color:#444;transform:scaleX(0.9850);">K</span>
<div style="left:1169.00px;top:58.50px;width:1.00px;height:7.00px;background:#ddd;"></div>
<span class="t" style="left:1173.60px;top:58.87px;font-size:7px;color:#444;transform:scaleX(0.9762);">?</span>
<svg style="left:1172.00px;top:72.50px;" width="7" height="5" viewBox="0 0 7 5"><path d="M1 4 L3.5 1.3 L6 4" fill="none" stroke="#555" stroke-width="1"/></svg>
<div style="left:267.70px;top:87.80px;width:1.00px;height:32.40px;background:#e1e3ea;"></div>
<div style="left:347.90px;top:87.80px;width:1.00px;height:32.40px;background:#e1e3ea;"></div>
<div style="left:402.00px;top:87.80px;width:1.00px;height:32.40px;background:#e1e3ea;"></div>
<div style="left:535.70px;top:87.80px;width:1.00px;height:32.40px;background:#e1e3ea;"></div>
<div style="left:599.80px;top:87.80px;width:1.00px;height:32.40px;background:#e1e3ea;"></div>
<div style="left:736.80px;top:87.80px;width:1.00px;height:32.40px;background:#e1e3ea;"></div>
<div style="left:790.00px;top:87.80px;width:1.00px;height:32.40px;background:#e1e3ea;"></div>
<div style="left:794.20px;top:85.20px;width:20.50px;height:38.70px;background:#dfe6f8;border:1px solid #b7c6ef;border-radius:2px;"></div>
<div style="left:821.10px;top:85.20px;width:20.30px;height:38.70px;background:#dfe6f8;border:1px solid #b7c6ef;border-radius:2px;"></div>
<svg style="left:214.50px;top:87.60px;" width="16" height="16" viewBox="0 0 16 16"><path d="M2.2 2 H12.6 L13.8 3.2 V14 H2.2 Z" fill="#444"/><rect x="4.3" y="3.6" width="7.4" height="3.3" fill="#fff"/><rect x="4.3" y="9.4" width="7.4" height="3.3" fill="#fff"/><rect x="11.6" y="3.2" width="1" height="1" fill="#fff"/></svg>
<span class="t" style="left:215.65px;top:107.55px;font-size:7.5px;color:#383838;transform:scaleX(0.7780);">Save</span>
<svg style="left:243.60px;top:87.60px;" width="16" height="16" viewBox="0 0 16 16"><path d="M2.6 8.6 V13.2 H13.4 V8.6" fill="none" stroke="#6b6b6b" stroke-width="1.5"/><path d="M6.8 2 H9.2 V6.4 H11.6 L8 10.6 L4.4 6.4 H6.8 Z" fill="#3f6fd2"/></svg>
<span class="t" style="left:237.75px;top:107.55px;font-size:7.5px;color:#383838;transform:scaleX(0.8424);">Download</span>
<svg style="left:273.70px;top:87.60px;" width="16" height="16" viewBox="0 0 16 16"><path d="M5.4 1.8 L9.6 10 M10.6 1.8 L6.4 10" stroke="#c9c9c9" stroke-width="1.1" fill="none"/><circle cx="5" cy="11.8" r="1.7" fill="none" stroke="#c9c9c9" stroke-width="1"/><circle cx="11" cy="11.8" r="1.7" fill="none" stroke="#c9c9c9" stroke-width="1"/></svg>
<span class="t" style="left:276.90px;top:107.55px;font-size:7.5px;color:#b8b8b8;transform:scaleX(0.8396);">Cut</span>
<svg style="left:300.40px;top:87.60px;" width="16" height="16" viewBox="0 0 16 16"><rect x="2.6" y="1.6" width="7.6" height="9.6" rx="1" fill="#fafafa" stroke="#d6d6d6"/><rect x="5.4" y="4" width="8" height="10.4" rx="1" fill="#fafafa" stroke="#d6d6d6"/><path d="M7.2 6.6 H11.6 M7.2 8.4 H11.6 M7.2 10.2 H11.6 M7.2 12 H11.6" stroke="#dcdcdc" stroke-width="0.8"/></svg>
<span class="t" style="left:301.45px;top:107.55px;font-size:7.5px;color:#b8b8b8;transform:scaleX(0.8053);">Copy</span>
<svg style="left:327.30px;top:87.60px;" width="16" height="16" viewBox="0 0 16 16"><rect x="1.8" y="2.2" width="9.6" height="11" rx="1" fill="#dcb567" stroke="#c49a4a" stroke-width="0.8"/><rect x="4.6" y="1" width="4" height="2.4" rx="0.8" fill="#c9a050"/><rect x="5.6" y="4.6" width="8.6" height="10.2" rx="1.2" fill="#fff" stroke="#8a8a8a" stroke-width="0.9"/><path d="M7.6 7.2 H12.2 M7.6 9 H12.2 M7.6 10.8 H12.2 M7.6 12.6 H12.2" stroke="#8c8c8c" stroke-width="0.9"/></svg>
<span class="t" style="left:327.85px;top:107.55px;font-size:7.5px;color:#383838;transform:scaleX(0.7873);">Paste</span>
<svg style="left:354.60px;top:87.60px;" width="16" height="16" viewBox="0 0 16 16"><rect x="2" y="2.6" width="9.4" height="9.4" fill="#f0f0f0" stroke="#3a5fc8" stroke-width="1.1" stroke-dasharray="1.6 1.1"/><path d="M9.8 8.6 L14.6 12.4 L12.6 12.6 L13.8 15 L12.8 15.5 L11.6 13.1 L10.2 14.4 Z" fill="#333"/></svg>
<span class="t" style="left:354.30px;top:107.55px;font-size:7.5px;color:#383838;transform:scaleX(0.7963);">Select</span>
<svg style="left:380.70px;top:87.60px;" width="16" height="16" viewBox="0 0 16 16"><path d="M3.6 3 H6.4 V5 L7 6 H9 L9.6 5 V3 H12.4 V5 L13.6 9.6 V13.2 H9.4 V9.4 H6.6 V13.2 H2.4 V9.6 L3.6 5 Z" fill="#444"/><rect x="2.4" y="10.6" width="4.2" height="0.9" fill="#999"/><rect x="9.4" y="10.6" width="4.2" height="0.9" fill="#999"/></svg>
<span class="t" style="left:383.10px;top:107.55px;font-size:7.5px;color:#383838;transform:scaleX(0.8087);">Find</span>
<svg style="left:408.00px;top:87.60px;" width="16" height="16" viewBox="0 0 16 16"><circle cx="10.4" cy="5.2" r="3.6" fill="#fff" stroke="#8b8b8b" stroke-width="0.9"/><rect x="2.2" y="4.2" width="6.6" height="7" fill="#8f8f8f" stroke="#777" stroke-width="0.6"/><path d="M9.2 6.8 L13.4 14 H5 Z" fill="#3d60c4"/></svg>
<span class="t" style="left:406.25px;top:107.55px;font-size:7.5px;color:#383838;transform:scaleX(0.7901);">Shapes</span>
<svg style="left:434.60px;top:87.60px;" width="16" height="16" viewBox="0 0 16 16"><rect x="1.8" y="3" width="12.4" height="10.2" fill="#4ea6ea" stroke="#8a7f78" stroke-width="1.1"/><path d="M2.4 12.6 V10.6 Q5 8.6 8 10.4 T13.6 10 V12.6 Z" fill="#58b04a"/><circle cx="10.4" cy="7" r="2" fill="#f3d63a"/></svg>
<span class="t" style="left:434.20px;top:107.55px;font-size:7.5px;color:#383838;transform:scaleX(0.8442);">Image</span>
<svg style="left:461.30px;top:87.60px;" width="16" height="16" viewBox="0 0 16 16"><rect x="2" y="3" width="12.4" height="10.2" fill="#fbfbfb" stroke="#dcdcdc" stroke-width="0.9"/><rect x="2" y="3" width="12.4" height="2.4" fill="#cfd9f2"/><path d="M2 8 H14.4 M2 10.6 H14.4 M6.1 5.4 V13.2 M10.3 5.4 V13.2" stroke="#dcdcdc" stroke-width="0.8"/></svg>
<span class="t" style="left:462.75px;top:107.55px;font-size:7.5px;color:#b8b8b8;transform:scaleX(0.7863);">Table</span>
<svg style="left:488.00px;top:87.60px;" width="16" height="16" viewBox="0 0 16 16"><rect x="1.6" y="3" width="12.8" height="10.2" rx="0.8" fill="#fff" stroke="#8a8a8a" stroke-width="1"/><path d="M4 8.6 L5.6 4.8 L7.2 8.6 M4.6 7.4 H6.6" fill="none" stroke="#555" stroke-width="0.9"/><path d="M8.6 5.4 H12.4 M8.6 7 H12.4 M3.6 10 H12.4 M3.6 11.4 H12.4" stroke="#9a9a9a" stroke-width="0.8"/></svg>
<span class="t" style="left:490.55px;top:107.55px;font-size:7.5px;color:#383838;transform:scaleX(0.8360);">Text</span>
<span class="t" style="left:491.75px;top:115.55px;font-size:7.5px;color:#383838;transform:scaleX(0.7041);">Box</span>
<svg style="left:514.60px;top:87.60px;" width="16" height="16" viewBox="0 0 16 16"><path d="M3 3 L13 13 M13 3 L3 13" stroke="#333" stroke-width="0.9"/><circle cx="8" cy="3" r="0.8" fill="#333"/><circle cx="8" cy="13" r="0.8" fill="#333"/><circle cx="3" cy="8" r="0.8" fill="#333"/><circle cx="13" cy="8" r="0.8" fill="#333"/></svg>
<span class="t" style="left:513.15px;top:107.55px;font-size:7.5px;color:#383838;transform:scaleX(0.8037);">Symbol</span>
<svg style="left:544.80px;top:87.60px;" width="16" height="16" viewBox="0 0 16 16"><rect x="2.6" y="2" width="10.6" height="12.6" rx="1.2" fill="#f4f4f4" stroke="#8a8a8a" stroke-width="1"/><path d="M8 1.6 H11.2 V8 L9.6 6.6 L8 8 Z" fill="#3f63c6"/><path d="M4.6 10.4 H11.2 M4.6 12.2 H11.2 M4.6 8.6 H6.8" stroke="#9a9a9a" stroke-width="0.8"/></svg>
<span class="t" style="left:539.25px;top:107.55px;font-size:7.5px;color:#383838;transform:scaleX(0.8145);">Bookmark</span>
<svg style="left:576.00px;top:87.60px;" width="16" height="16" viewBox="0 0 16 16"><circle cx="7" cy="6.6" r="5.2" fill="#fff" stroke="#8a8a8a" stroke-width="0.9"/><ellipse cx="7" cy="6.6" rx="2.4" ry="5.2" fill="none" stroke="#8a8a8a" stroke-width="0.8"/><path d="M1.8 6.6 H12.2 M2.6 4 H11.4 M2.6 9.2 H11.4 M7 1.4 V11.8" stroke="#8a8a8a" stroke-width="0.8"/><rect x="6.4" y="10.4" width="4.8" height="3.4" rx="1.7" fill="#fff" stroke="#333" stroke-width="0.9"/><rect x="9.8" y="10.4" width="4.8" height="3.4" rx="1.7" fill="none" stroke="#333" stroke-width="0.9"/></svg>
<span class="t" style="left:570.90px;top:107.55px;font-size:7.5px;color:#383838;transform:scaleX(0.8509);">Hyperlink</span>
<svg style="left:605.60px;top:87.60px;" width="16" height="16" viewBox="0 0 16 16"><rect x="2.6" y="1.6" width="10.8" height="12.8" rx="1.2" fill="#fdfdfd" stroke="#868686" stroke-width="1"/><rect x="4.2" y="3.6" width="7.6" height="2" fill="#dba52c" stroke="#7a6a40" stroke-width="0.3"/><path d="M4.2 7 H11.8 M4.2 8.8 H11.8 M4.2 10.6 H11.8 M4.2 12.4 H11.8" stroke="#b5b5b5" stroke-width="0.8"/></svg>
<span class="t" style="left:603.70px;top:107.55px;font-size:7.5px;color:#383838;transform:scaleX(0.8048);">Header</span>
<svg style="left:632.40px;top:87.60px;" width="16" height="16" viewBox="0 0 16 16"><rect x="2.6" y="1.6" width="10.8" height="12.8" rx="1.2" fill="#fdfdfd" stroke="#868686" stroke-width="1"/><rect x="4.2" y="10.4" width="7.6" height="2" fill="#dba52c" stroke="#7a6a40" stroke-width="0.3"/><path d="M4.2 3.8 H11.8 M4.2 5.6 H11.8 M4.2 7.4 H11.8 M4.2 9.2 H11.8" stroke="#b5b5b5" stroke-width="0.8"/></svg>
<span class="t" style="left:631.30px;top:107.55px;font-size:7.5px;color:#383838;transform:scaleX(0.8026);">Footer</span>
<svg style="left:659.00px;top:87.60px;" width="16" height="16" viewBox="0 0 16 16"><rect x="2.6" y="1.6" width="10.8" height="12.8" rx="1.2" fill="#fdfdfd" stroke="#868686" stroke-width="1"/><path d="M5.8 11.6 V10.8 M7.2 11.6 V10 M8.8 11.6 V10.4 M10.2 11.6 V10.8" stroke="#4a6fd0" stroke-width="0.9"/></svg>
<span class="t" style="left:660.90px;top:107.55px;font-size:7.5px;color:#383838;transform:scaleX(0.6508);">Page</span>
<span class="t" style="left:655.80px;top:115.55px;font-size:7.5px;color:#383838;transform:scaleX(0.8097);">Number</span>
<svg style="left:686.70px;top:87.60px;" width="16" height="16" viewBox="0 0 16 16"><rect x="2.6" y="2.6" width="10.8" height="12.2" rx="1.2" fill="#fdfdfd" stroke="#868686" stroke-width="1"/><path d="M4.4 5 H11.6 M4.4 6.8 H11.6 M4.4 8.6 H11.6" stroke="#a5a5a5" stroke-width="0.9"/><rect x="3.2" y="10.2" width="9.6" height="4" fill="#b3cf8c"/><path d="M4.6 12.2 H11.4" stroke="#6f9440" stroke-width="0.9" stroke-dasharray="1.2 0.7"/></svg>
<span class="t" style="left:682.65px;top:107.55px;font-size:7.5px;color:#383838;transform:scaleX(0.8207);">Footnote</span>
<svg style="left:715.00px;top:87.60px;" width="16" height="16" viewBox="0 0 16 16"><rect x="5.4" y="3.2" width="8.6" height="11" rx="1" fill="#fff" stroke="#9a9a9a" stroke-width="0.9"/><rect x="2" y="1.6" width="8.6" height="10.4" rx="1" fill="#b6d292" stroke="#93b36e" stroke-width="0.9"/><path d="M4.6 4 H3.9 V9.4 H4.6 M8 4 H8.7 V9.4 H8 M6.3 5 V8.6" fill="none" stroke="#55772e" stroke-width="0.9"/></svg>
<span class="t" style="left:711.90px;top:107.55px;font-size:7.5px;color:#383838;transform:scaleX(0.8159);">Endnote</span>
<svg style="left:742.50px;top:87.60px;" width="16" height="16" viewBox="0 0 16 16"><path d="M3.4 1.4 V5.4 H12.6 V1.4 M3.4 14.6 V10.6 H12.6 V14.6" fill="#fbfbfb" stroke="#dadada" stroke-width="0.9"/><path d="M3.4 3.4 H12.6 M3.4 12.6 H12.6 M2 8 H14" stroke="#e2e2e2" stroke-width="0.8"/></svg>
<span class="t" style="left:744.80px;top:107.55px;font-size:7.5px;color:#b8b8b8;transform:scaleX(0.6508);">Page</span>
<span class="t" style="left:743.95px;top:115.55px;font-size:7.5px;color:#b8b8b8;transform:scaleX(0.6686);">Break</span>
<svg style="left:769.50px;top:87.60px;" width="16" height="16" viewBox="0 0 16 16"><rect x="2" y="1.4" width="9" height="10.6" rx="1.2" fill="#fdfdfd" stroke="#8a8a8a" stroke-width="0.9"/><path d="M3.8 3.8 H8.2" stroke="#aaa" stroke-width="0.8"/><rect x="4.4" y="5.6" width="10.4" height="8.8" rx="1.4" fill="#fdfdfd" stroke="#7e7e7e" stroke-width="1"/><path d="M6.4 8 H12.8 M6.4 9.8 H12.8 M6.4 11.6 H12.8" stroke="#8a8a8a" stroke-width="0.9"/></svg>
<span class="t" style="left:771.60px;top:107.55px;font-size:7.5px;color:#383838;transform:scaleX(0.6508);">Page</span>
<span class="t" style="left:770.60px;top:115.55px;font-size:7.5px;color:#383838;transform:scaleX(0.6836);">Setup</span>
<svg style="left:796.50px;top:87.60px;" width="16" height="16" viewBox="0 0 16 16"><rect x="1.8" y="2.8" width="12.4" height="10.6" rx="0.8" fill="#fdfdfd" stroke="#7c7c7c" stroke-width="0.9"/><rect x="1.8" y="2.4" width="12.4" height="2" fill="#2e2e2e"/><rect x="10.4" y="4.4" width="3.4" height="8.6" fill="#c5d3f4"/><path d="M11.4 7.4 L13 8.7 L11.4 10 Z" fill="#3f63c6"/></svg>
<span class="t" style="left:799.05px;top:107.55px;font-size:7.5px;color:#383838;transform:scaleX(0.7068);">Task</span>
<span class="t" style="left:798.65px;top:115.55px;font-size:7.5px;color:#383838;transform:scaleX(0.6679);">Pane</span>
<svg style="left:823.10px;top:87.60px;" width="16" height="16" viewBox="0 0 16 16"><rect x="1.6" y="2" width="12.8" height="12.2" fill="#fdfdfd" stroke="#8a8a8a" stroke-width="0.9"/><rect x="5" y="5.4" width="9" height="8.4" fill="#9c9c9c"/><path d="M3 4 V2.6 M5 4 V2.6 M7 4 V2.6 M9 4 V2.6 M11 4 V2.6 M13 4 V2.6 M2.2 6 H3.4 M2.2 8 H3.4 M2.2 10 H3.4 M2.2 12 H3.4" stroke="#999" stroke-width="0.5"/></svg>
<span class="t" style="left:824.50px;top:107.55px;font-size:7.5px;color:#383838;transform:scaleX(0.7364);">Ruler</span>
<div style="left:243.00px;top:129.60px;width:1.00px;height:9.00px;background:#dfe1e8;"></div>
<div style="left:310.80px;top:129.60px;width:1.00px;height:9.00px;background:#dfe1e8;"></div>
<div style="left:370.30px;top:129.60px;width:1.00px;height:9.00px;background:#dfe1e8;"></div>
<div style="left:421.70px;top:129.60px;width:1.00px;height:9.00px;background:#dfe1e8;"></div>
<div style="left:469.80px;top:129.60px;width:1.00px;height:9.00px;background:#dfe1e8;"></div>
<div style="left:529.90px;top:129.60px;width:1.00px;height:9.00px;background:#dfe1e8;"></div>
<div style="left:563.30px;top:129.60px;width:1.00px;height:9.00px;background:#dfe1e8;"></div>
<div style="left:610.90px;top:129.60px;width:1.00px;height:9.00px;background:#dfe1e8;"></div>
<div style="left:671.80px;top:129.60px;width:1.00px;height:9.00px;background:#dfe1e8;"></div>
<div style="left:704.90px;top:129.60px;width:1.00px;height:9.00px;background:#dfe1e8;"></div>
<div style="left:764.90px;top:129.60px;width:1.00px;height:9.00px;background:#dfe1e8;"></div>
<div style="left:812.90px;top:129.60px;width:1.00px;height:9.00px;background:#dfe1e8;"></div>
<div style="left:860.80px;top:129.60px;width:1.00px;height:9.00px;background:#dfe1e8;"></div>
<div style="left:908.70px;top:129.60px;width:1.00px;height:9.00px;background:#dfe1e8;"></div>
<svg style="left:214.00px;top:127.90px;" width="12" height="12" viewBox="0 0 12 12"><path d="M2 3.2 V7.4 H6.2 L4.6 5.8 Q7.4 4.4 9.6 8.4 Q9.4 3 3.6 4.8 Z" fill="#444"/></svg>
<svg style="left:228.00px;top:127.90px;" width="12" height="12" viewBox="0 0 12 12"><path d="M10 3.2 V7.4 H5.8 L7.4 5.8 Q4.6 4.4 2.4 8.4 Q2.6 3 8.4 4.8 Z" fill="#cfcfcf"/></svg>
<span class="t" style="left:253.20px;top:130.01px;font-size:7.2px;color:#444;transform:scaleX(0.8449);">Normal</span>
<svg style="left:300.10px;top:132.70px;" width="5" height="4" viewBox="0 0 5 4"><path d="M1.1 0.8 H3.9 L2.5 2.5 Z" fill="#6a6a6a"/></svg>
<span class="t" style="left:317.10px;top:130.01px;font-size:7.2px;color:#444;transform:scaleX(0.8749);">Arial</span>
<svg style="left:359.70px;top:132.70px;" width="5" height="4" viewBox="0 0 5 4"><path d="M1.1 0.8 H3.9 L2.5 2.5 Z" fill="#6a6a6a"/></svg>
<span class="t" style="left:377.40px;top:130.01px;font-size:7.2px;color:#444;transform:scaleX(0.8492);">18</span>
<span class="t" style="left:401.80px;top:130.01px;font-size:7.2px;color:#444;">pt</span>
<svg style="left:411.00px;top:132.70px;" width="5" height="4" viewBox="0 0 5 4"><path d="M1.1 0.8 H3.9 L2.5 2.5 Z" fill="#6a6a6a"/></svg>
<span class="t" style="left:429.40px;top:128.58px;font-size:9px;color:#cf3f3f;">A</span>
<div style="left:428.40px;top:137.20px;width:8.00px;height:1.60px;background:#e4e0e0;border-radius:1px;"></div>
<svg style="left:437.70px;top:132.70px;" width="5" height="4" viewBox="0 0 5 4"><path d="M1.1 0.8 H3.9 L2.5 2.5 Z" fill="#6a6a6a"/></svg>
<svg style="left:447.60px;top:127.90px;" width="12" height="12" viewBox="0 0 12 12"><path d="M3.4 8.2 L7.8 2.4 L9.6 3.8 L5.2 9.4 Z" fill="#d9cd3c"/><path d="M3.4 8.2 L5.2 9.4 L3 10 Z" fill="#8a8a5a"/><rect x="1.6" y="10.2" width="8" height="1.5" rx="0.7" fill="#e2e2dc"/></svg>
<svg style="left:459.20px;top:132.70px;" width="5" height="4" viewBox="0 0 5 4"><path d="M1.1 0.8 H3.9 L2.5 2.5 Z" fill="#6a6a6a"/></svg>
<div style="left:474.20px;top:128.80px;width:10.60px;height:9.90px;background:#dfe6f8;border:1px solid #a9bbf0;border-radius:1.5px;"></div>
<span class="t" style="left:476.40px;top:129.04px;font-size:9.4px;color:#333;transform:scaleX(0.9889);-webkit-text-stroke:0.25px #333;">A</span>
<span class="t" style="left:490.60px;top:129.04px;font-size:9.4px;color:#444;font-style:italic;transform:scaleX(0.9251);">A</span>
<span class="t" style="left:504.30px;top:128.54px;font-size:9.4px;color:#555;transform:scaleX(0.9251);">A</span>
<div style="left:503.80px;top:137.10px;width:6.80px;height:0.80px;background:#555;"></div>
<span class="t" style="left:517.80px;top:129.04px;font-size:9.4px;color:#555;transform:scaleX(0.9251);">A</span>
<div style="left:517.00px;top:133.70px;width:7.40px;height:0.80px;background:#444;"></div>
<svg style="left:533.80px;top:127.90px;" width="12" height="12" viewBox="0 0 12 12"><rect x="2.2" y="2.9" width="6" height="6.6" fill="none" stroke="#8c8c8c" stroke-width="0.7" stroke-dasharray="0.9 0.8"/><path d="M5.2 2.9 V9.5 M2.2 6.2 H8.2" stroke="#a5a5a5" stroke-width="0.6" stroke-dasharray="0.9 0.8"/><path d="M8.9 5 L10.2 1.6 L11.5 5 M9.4 3.9 H11" fill="none" stroke="#555" stroke-width="0.7"/></svg>
<svg style="left:547.90px;top:127.90px;" width="12" height="12" viewBox="0 0 12 12"><rect x="2.2" y="2.4" width="6" height="6.6" fill="none" stroke="#8c8c8c" stroke-width="0.7" stroke-dasharray="0.9 0.8"/><path d="M5.2 2.4 V9 M2.2 5.7 H8.2" stroke="#a5a5a5" stroke-width="0.6" stroke-dasharray="0.9 0.8"/><path d="M8.4 10.6 L9.7 7.2 L11 10.6 M8.9 9.5 H10.5" fill="none" stroke="#555" stroke-width="0.7"/></svg>
<svg style="left:569.60px;top:127.90px;" width="12" height="12" viewBox="0 0 12 12"><path d="M2.4 3 H9.6 M2.4 3 L3.6 2.1 M2.4 3 L3.6 3.9 M9.6 3 L8.4 2.1 M9.6 3 L8.4 3.9" stroke="#3f63c6" stroke-width="0.7" fill="none"/></svg>
<span class="t" style="left:572.40px;top:133.17px;font-size:5px;color:#444;transform:scaleX(0.9593);">AB</span>
<span class="t" style="left:581.80px;top:130.21px;font-size:7.2px;color:#444;transform:scaleX(0.8991);">0</span>
<span class="t" style="left:598.10px;top:130.01px;font-size:7.2px;color:#444;transform:scaleX(0.9327);">pt</span>
<svg style="left:615.20px;top:127.90px;" width="12" height="12" viewBox="0 0 12 12"><path d="M2.2 2.4 H9.8 L5.2 6 L9.8 9.7 H2.2 Z" fill="#8e8e8e"/></svg>
<svg style="left:628.90px;top:127.90px;" width="12" height="12" viewBox="0 0 12 12"><path d="M2.2 2.9 H9.8 M2.2 5 H9.8 M2.2 7.1 H9.8 M2.2 9.2 H9.8" stroke="#b0b0b0" stroke-width="1"/><rect x="3.9" y="2.4" width="4.2" height="7.3" fill="#8e8e8e"/></svg>
<svg style="left:642.80px;top:127.90px;" width="12" height="12" viewBox="0 0 12 12"><path d="M9.8 2.4 H2.2 L6.8 6 L2.2 9.7 H9.8 Z" fill="#8e8e8e"/></svg>
<div style="left:657.20px;top:128.40px;width:10.80px;height:10.30px;background:#dfe6f8;border:1px solid #a9bbf0;border-radius:1.5px;"></div>
<div style="left:659.30px;top:130.70px;width:6.90px;height:7.00px;background:#8b8f9e;"></div>
<svg style="left:675.60px;top:127.90px;" width="12" height="12" viewBox="0 0 12 12"><rect x="2.4" y="7.2" width="7.4" height="2.6" fill="#dedede"/><rect x="6.6" y="2.6" width="3.2" height="4.6" fill="#e2e6f2"/><path d="M1.8 4.6 H5.2 M3.5 3 V6.2" stroke="#d5dcf2" stroke-width="0.9"/></svg>
<svg style="left:689.60px;top:127.90px;" width="12" height="12" viewBox="0 0 12 12"><rect x="2.4" y="7.2" width="7.4" height="2.6" fill="#858585"/><rect x="6.6" y="2.6" width="3.2" height="4.6" fill="#8d9ccf"/><path d="M1.6 4.6 H5.4 M3.5 2.8 V6.4" stroke="#3f63c6" stroke-width="1"/></svg>
<svg style="left:709.70px;top:127.90px;" width="12" height="12" viewBox="0 0 12 12"><path d="M8.4 2.2 V9.8 M7.2 3.5 L8.4 2.2 L9.6 3.5 M7.2 8.5 L8.4 9.8 L9.6 8.5" stroke="#4a6fd0" stroke-width="0.8" fill="none"/><rect x="3" y="2.4" width="2.6" height="2.8" fill="#8a8a8a"/><rect x="3" y="6.8" width="2.6" height="2.8" fill="#8a8a8a"/></svg>
<span class="t" style="left:725.40px;top:130.01px;font-size:7.2px;color:#444;transform:scaleX(0.8707);">1.15</span>
<svg style="left:754.00px;top:132.70px;" width="5" height="4" viewBox="0 0 5 4"><path d="M1.1 0.8 H3.9 L2.5 2.5 Z" fill="#6a6a6a"/></svg>
<svg style="left:769.20px;top:127.90px;" width="12" height="12" viewBox="0 0 12 12"><path d="M4.2 3 H10.2 M4.2 6 H10.2 M4.2 9 H10.2" stroke="#8c8c8c" stroke-width="0.9"/><path d="M2.4 1.8 V10.4" stroke="#666" stroke-width="0.8"/></svg>
<svg style="left:780.90px;top:132.70px;" width="5" height="4" viewBox="0 0 5 4"><path d="M1.1 0.8 H3.9 L2.5 2.5 Z" fill="#6a6a6a"/></svg>
<svg style="left:790.20px;top:127.90px;" width="12" height="12" viewBox="0 0 12 12"><path d="M4.4 3 H10.4 M4.4 6 H10.4 M4.4 9 H10.4" stroke="#8c8c8c" stroke-width="0.9"/><rect x="1.4" y="2.3" width="1.6" height="1.4" fill="#555"/><rect x="1.4" y="5.3" width="1.6" height="1.4" fill="#555"/><rect x="1.4" y="8.3" width="1.6" height="1.4" fill="#555"/></svg>
<svg style="left:802.10px;top:132.70px;" width="5" height="4" viewBox="0 0 5 4"><path d="M1.1 0.8 H3.9 L2.5 2.5 Z" fill="#6a6a6a"/></svg>
<svg style="left:819.00px;top:127.90px;" width="12" height="12" viewBox="0 0 12 12"><path d="M2.4 2.2 H9.6" stroke="#888" stroke-width="0.9"/><rect x="2.4" y="7.4" width="7.2" height="2.6" fill="#9a9a9a"/><path d="M6 3.2 V6.4 M4.8 4.4 L6 3.2 L7.2 4.4" stroke="#3f63c6" stroke-width="0.9" fill="none"/></svg>
<span class="t" style="left:831.10px;top:130.01px;font-size:7.2px;color:#444;transform:scaleX(0.8793);">5.3</span>
<span class="t" style="left:847.20px;top:130.01px;font-size:7.2px;color:#444;transform:scaleX(0.8943);">px</span>
<svg style="left:867.00px;top:127.90px;" width="12" height="12" viewBox="0 0 12 12"><path d="M2.4 9.8 H9.6" stroke="#888" stroke-width="0.9"/><rect x="2.4" y="2" width="7.2" height="2.6" fill="#9a9a9a"/><path d="M6 5.6 V8.8 M4.8 7.6 L6 8.8 L7.2 7.6" stroke="#3f63c6" stroke-width="0.9" fill="none"/></svg>
<span class="t" style="left:879.30px;top:130.01px;font-size:7.2px;color:#444;transform:scaleX(0.8793);">5.3</span>
<span class="t" style="left:895.30px;top:130.01px;font-size:7.2px;color:#444;transform:scaleX(0.8680);">px</span>
<svg style="left:912.40px;top:127.90px;" width="12" height="12" viewBox="0 0 12 12"><rect x="2" y="1.6" width="7" height="8.8" fill="#e9e9e9" stroke="#8a8a8a" stroke-width="0.8"/><rect x="3.2" y="6.8" width="4.6" height="3" fill="#4a6fd0"/><path d="M6.2 6 L10.6 2.6 L11 5.6 Z" fill="#333"/></svg>
<svg style="left:926.60px;top:127.90px;" width="12" height="12" viewBox="0 0 12 12"><rect x="2" y="1.6" width="7" height="8.8" fill="#dcdcdc" stroke="#9a9a9a" stroke-width="0.8"/><path d="M7.6 8.2 L10.6 11 M10.6 8.2 L7.6 11" stroke="#777" stroke-width="0.9"/></svg>
</div></div>
</div></body></html>
